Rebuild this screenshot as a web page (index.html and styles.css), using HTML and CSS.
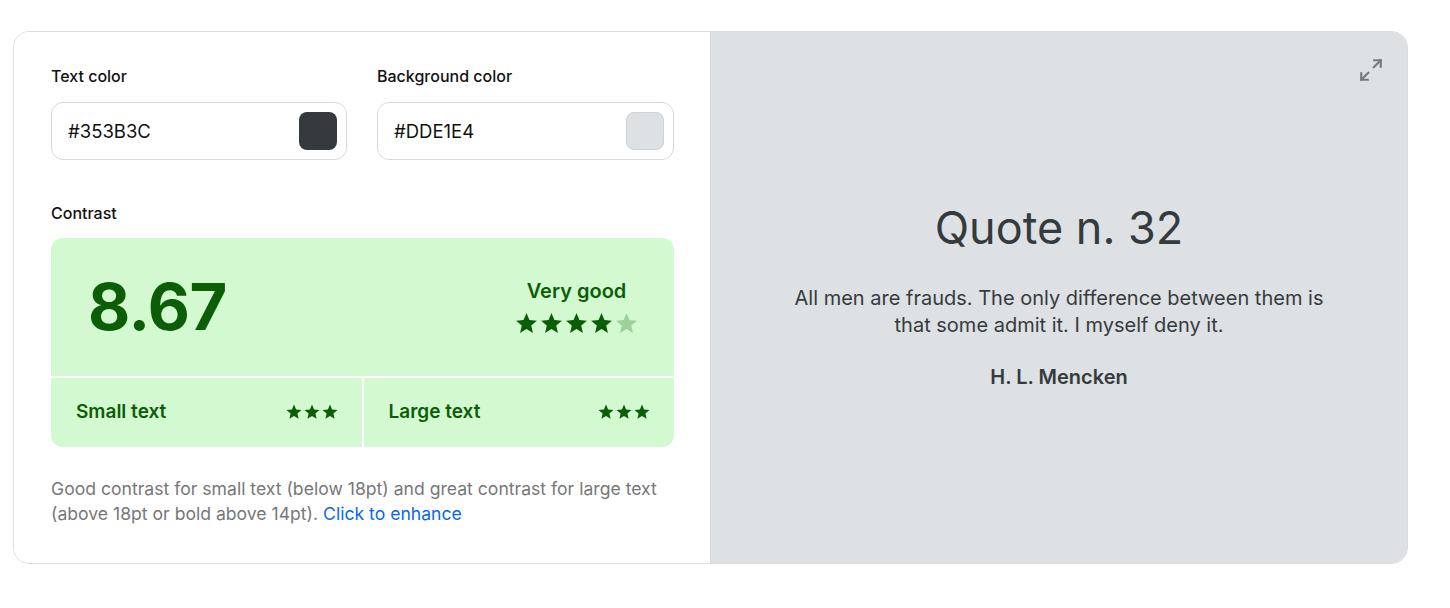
FILE: index.html
```html
<!DOCTYPE html>
<html>
<head>
<meta charset="utf-8">
<link rel="stylesheet" href="styles.css">
</head>
<body>
<div class="card">
  <div class="left">
    <div class="pickers">
      <div class="field">
        <div class="label">Text color</div>
        <div class="input"><span class="hex">#353B3C</span><span class="swatch dark"></span></div>
      </div>
      <div class="field">
        <div class="label">Background color</div>
        <div class="input"><span class="hex">#DDE1E4</span><span class="swatch light"></span></div>
      </div>
    </div>
    <div class="label contrast-label">Contrast</div>
    <div class="score">
      <div class="score-top">
        <div class="ratio">8.67</div>
        <div class="rating">
          <div class="rating-text">Very good</div>
          <div class="stars big">
            <svg viewBox="0 0 24 24"><path d="M12 17.27L18.18 21l-1.64-7.03L22 9.24l-7.19-.61L12 2 9.19 8.63 2 9.24l5.46 4.73L5.82 21z"/></svg>
            <svg viewBox="0 0 24 24"><path d="M12 17.27L18.18 21l-1.64-7.03L22 9.24l-7.19-.61L12 2 9.19 8.63 2 9.24l5.46 4.73L5.82 21z"/></svg>
            <svg viewBox="0 0 24 24"><path d="M12 17.27L18.18 21l-1.64-7.03L22 9.24l-7.19-.61L12 2 9.19 8.63 2 9.24l5.46 4.73L5.82 21z"/></svg>
            <svg viewBox="0 0 24 24"><path d="M12 17.27L18.18 21l-1.64-7.03L22 9.24l-7.19-.61L12 2 9.19 8.63 2 9.24l5.46 4.73L5.82 21z"/></svg>
            <svg class="off" viewBox="0 0 24 24"><path d="M12 17.27L18.18 21l-1.64-7.03L22 9.24l-7.19-.61L12 2 9.19 8.63 2 9.24l5.46 4.73L5.82 21z"/></svg>
          </div>
        </div>
      </div>
      <div class="score-bottom">
        <div class="cell">
          <span class="cell-label">Small text</span>
          <span class="stars small">
            <svg viewBox="0 0 24 24"><path d="M12 17.27L18.18 21l-1.64-7.03L22 9.24l-7.19-.61L12 2 9.19 8.63 2 9.24l5.46 4.73L5.82 21z"/></svg>
            <svg viewBox="0 0 24 24"><path d="M12 17.27L18.18 21l-1.64-7.03L22 9.24l-7.19-.61L12 2 9.19 8.63 2 9.24l5.46 4.73L5.82 21z"/></svg>
            <svg viewBox="0 0 24 24"><path d="M12 17.27L18.18 21l-1.64-7.03L22 9.24l-7.19-.61L12 2 9.19 8.63 2 9.24l5.46 4.73L5.82 21z"/></svg>
          </span>
        </div>
        <div class="cell">
          <span class="cell-label">Large text</span>
          <span class="stars small">
            <svg viewBox="0 0 24 24"><path d="M12 17.27L18.18 21l-1.64-7.03L22 9.24l-7.19-.61L12 2 9.19 8.63 2 9.24l5.46 4.73L5.82 21z"/></svg>
            <svg viewBox="0 0 24 24"><path d="M12 17.27L18.18 21l-1.64-7.03L22 9.24l-7.19-.61L12 2 9.19 8.63 2 9.24l5.46 4.73L5.82 21z"/></svg>
            <svg viewBox="0 0 24 24"><path d="M12 17.27L18.18 21l-1.64-7.03L22 9.24l-7.19-.61L12 2 9.19 8.63 2 9.24l5.46 4.73L5.82 21z"/></svg>
          </span>
        </div>
      </div>
    </div>
    <p class="note">Good contrast for small text (below 18pt) and great contrast for large text (above 18pt or bold above 14pt). <a class="link">Click to enhance</a></p>
  </div>
  <div class="right">
    <svg class="expand" viewBox="0 0 24 24" fill="none" stroke="currentColor" stroke-width="2" stroke-linecap="square"><polyline points="15 3 21 3 21 9"/><polyline points="9 21 3 21 3 15"/><line x1="21" y1="3" x2="14.5" y2="9.5"/><line x1="3" y1="21" x2="9.5" y2="14.5"/></svg>
    <div class="quote">
      <h1 class="quote-title">Quote n. 32</h1>
      <p class="quote-text">All men are frauds. The only difference between them is that some admit it. I myself deny it.</p>
      <p class="quote-author">H. L. Mencken</p>
    </div>
  </div>
</div>
</body>
</html>
```

FILE: styles.css
```css
* { box-sizing: border-box; }
html, body { margin: 0; padding: 0; background: #fff; }
body {
  font-family: Inter, "Noto Sans", sans-serif;
  padding: 31px 0 0 13px;
  color: #111;
}
.card {
  width: 1395px;
  height: 533px;
  border: 1px solid #dcdcdc;
  border-radius: 16px;
  display: flex;
  overflow: hidden;
}
.left {
  width: 697px;
  padding: 33px 36px 0 37px;
  background: #fff;
  border-right: 1px solid #d6d6d6;
}
.pickers {
  display: grid;
  grid-template-columns: 296px 297px;
  column-gap: 30px;
}
.label {
  font-size: 16px;
  font-weight: 500;
  line-height: 22px;
  color: #111;
}
.input {
  margin-top: 15px;
  height: 58px;
  border: 1px solid #d9d9d9;
  border-radius: 12px;
  display: flex;
  align-items: center;
  justify-content: space-between;
  padding: 0 9px 0 16px;
}
.hex { font-size: 18.5px; color: #111; }
.swatch {
  width: 38px;
  height: 38px;
  border-radius: 8px;
}
.swatch.dark { background: #353B3C; }
.swatch.light { background: #DDE1E4; border: 1px solid #cfd3d6; }
.contrast-label { margin-top: 42px; }
.score {
  margin-top: 14px;
  width: 623px;
  border-radius: 12px;
  overflow: hidden;
  display: flex;
  flex-direction: column;
  gap: 2px;
  background: #fff;
}
.score-top {
  height: 138px;
  background: #d3f9d1;
  display: flex;
  align-items: center;
  justify-content: space-between;
  padding: 0 35px 0 37px;
  color: #0c5e06;
}
.ratio {
  font-size: 65px;
  font-weight: 700;
  letter-spacing: -0.5px;
  margin-top: -2px;
}
.rating {
  display: flex;
  flex-direction: column;
  align-items: center;
  gap: 8px;
  margin-top: 1px;
}
.rating-text { font-size: 20px; font-weight: 600; line-height: 24px; }
.stars { display: flex; }
.stars svg { fill: #0c5e06; display: block; }
.stars.big { gap: 0px; }
.stars.big svg { width: 25px; height: 25px; }
.stars .off { fill: #9dd29a; }
.score-bottom {
  display: flex;
  gap: 2px;
  height: 69px;
}
.cell {
  flex: 1;
  background: #d3f9d1;
  display: flex;
  align-items: center;
  justify-content: space-between;
  padding: 0 23px 2px 25px;
  color: #0c5e06;
}
.cell-label { font-size: 19px; font-weight: 600; }
.stars.small svg { width: 18px; height: 18px; }
.note {
  margin: 29px 0 0;
  font-size: 17.6px;
  line-height: 25px;
  color: #777;
}
.link { color: #0a66f0; cursor: pointer; }
.right {
  flex: 1;
  background: #dde1e4;
  position: relative;
  display: flex;
  align-items: center;
  justify-content: center;
  color: #353b3c;
}
.expand {
  position: absolute;
  top: 25px;
  right: 23px;
  width: 26px;
  height: 26px;
  color: #777a7d;
}
.quote {
  text-align: center;
  width: 560px;
  margin-top: -4px;
}
.quote-title {
  margin: 0;
  font-size: 45px;
  font-weight: 400;
  line-height: 54px;
}
.quote-text {
  margin: 30px 0 0;
  font-size: 20px;
  line-height: 27px;
}
.quote-author {
  margin: 25px 0 0;
  font-size: 20px;
  font-weight: 600;
  line-height: 26px;
}
```
